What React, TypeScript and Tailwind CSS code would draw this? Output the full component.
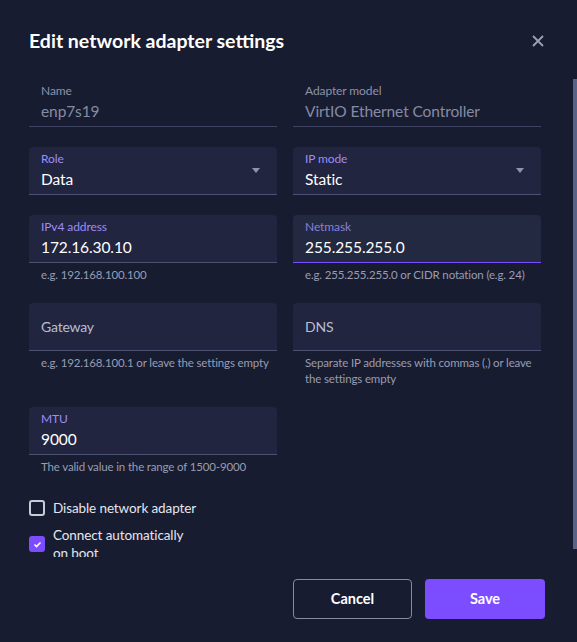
import React from 'react';

type FieldProps = {
  label?: string;
  value?: string;
  placeholder?: string;
  helper?: string;
  select?: boolean;
  focused?: boolean;
  disabled?: boolean;
};

function Field({ label, value, placeholder, helper, select, focused, disabled }: FieldProps) {
  if (disabled) {
    return (
      <div>
        <div className="h-[48px] px-[12px] pt-[4px] border-b border-[#3d4361]">
          <div className="text-[12px] leading-[16px] tracking-[-0.1px] text-[#8c92aa]">{label}</div>
          <div className="mt-[2px] text-[15.5px] leading-[20px] tracking-[-0.1px] text-[#858ba4]">{value}</div>
        </div>
      </div>
    );
  }

  return (
    <div>
      <div
        className={`relative h-[48px] rounded-t-[4px] border-b px-[12px] ${
          focused ? 'bg-[#222940] border-[#7c4dff]' : 'bg-[#212540] border-[#4b5170]'
        } ${value ? 'pt-[4px]' : 'flex items-center'}`}
      >
        {value ? (
          <>
            <div
              className={`text-[12px] leading-[16px] tracking-[-0.1px] ${
                focused ? 'text-[#8b80d6]' : 'text-[#9d8cf7]'
              }`}
            >
              {label}
            </div>
            <div className="mt-[2px] text-[15.5px] leading-[20px] tracking-[-0.1px] text-white">{value}</div>
          </>
        ) : (
          <div className="text-[14px] tracking-[-0.2px] text-[#b9bed0]">{placeholder}</div>
        )}
        {select && (
          <svg className="absolute right-[17px] top-[21px]" width="8" height="5" viewBox="0 0 8 5">
            <path d="M0 0h8L4 5z" fill="#8e93ae" />
          </svg>
        )}
      </div>
      {helper && (
        <p className="mt-[4px] pl-[12px] text-[11.5px] leading-[16px] tracking-[-0.15px] text-[#979db3]">{helper}</p>
      )}
    </div>
  );
}

function Checkbox({ checked, label }: { checked?: boolean; label: string }) {
  return (
    <label className="flex items-center gap-[8px]">
      {checked ? (
        <span className="flex h-[16px] w-[16px] shrink-0 items-center justify-center rounded-[3px] bg-[#7c4dff]">
          <svg width="9" height="7" viewBox="0 0 9 7">
            <path d="M1.5 3.5l2 2L7.5 1.5" fill="none" stroke="white" strokeWidth="1.6" />
          </svg>
        </span>
      ) : (
        <span className="h-[16px] w-[16px] shrink-0 rounded-[3px] border-2 border-[#c8ccd8]" />
      )}
      <span className="max-w-[148px] text-[13.5px] leading-[18px] tracking-[-0.1px] text-[#e3e6ee]">{label}</span>
    </label>
  );
}

export default function App() {
  return (
    <div
      className="relative flex h-[642px] w-[577px] flex-col bg-[#181c30] text-white"
      style={{ fontFamily: 'Lato, "Noto Sans", sans-serif' }}
    >
      <header className="flex h-[62px] shrink-0 items-start justify-between pl-[29px] pr-[32px] pt-[29px]">
        <h2 className="text-[19.5px] font-bold leading-[24px] text-white">Edit network adapter settings</h2>
        <button className="mt-[5px] text-[#9aa0b8]" aria-label="Close">
          <svg width="14" height="14" viewBox="0 0 14 14">
            <path d="M2 2l10 10M12 2L2 12" stroke="currentColor" strokeWidth="1.8" />
          </svg>
        </button>
      </header>

      <div className="h-[495px] shrink-0 overflow-hidden pl-[29px] pr-[36px] pt-[17px]">
        <div className="grid grid-cols-2 items-start gap-x-[16px] gap-y-[20px]">
          <Field disabled label="Name" value="enp7s19" />
          <Field disabled label="Adapter model" value="VirtIO Ethernet Controller" />
          <Field select label="Role" value="Data" />
          <Field select label="IP mode" value="Static" />
          <Field label="IPv4 address" value="172.16.30.10" helper="e.g. 192.168.100.100" />
          <Field focused label="Netmask" value="255.255.255.0" helper="e.g. 255.255.255.0 or CIDR notation (e.g. 24)" />
          <Field placeholder="Gateway" helper="e.g. 192.168.100.1 or leave the settings empty" />
          <Field placeholder="DNS" helper="Separate IP addresses with commas (,) or leave the settings empty" />
          <Field label="MTU" value="9000" helper="The valid value in the range of 1500-9000" />
        </div>

        <div className="mt-[24px] flex flex-col gap-[9px]">
          <Checkbox label="Disable network adapter" />
          <Checkbox checked label="Connect automatically on boot" />
        </div>
      </div>

      {/* scroll thumb */}
      <div className="absolute right-0 top-[79px] h-[470px] w-[4px] bg-[#596386]" />

      <footer className="flex justify-end gap-[13px] pr-[32px] pt-[22px]">
        <button className="h-[40px] w-[119px] rounded-[4px] border border-[#868ba0] text-[14.5px] font-bold text-white">
          Cancel
        </button>
        <button className="h-[40px] w-[120px] rounded-[4px] bg-[#7c4dff] text-[14.5px] font-bold text-white">
          Save
        </button>
      </footer>
    </div>
  );
}
